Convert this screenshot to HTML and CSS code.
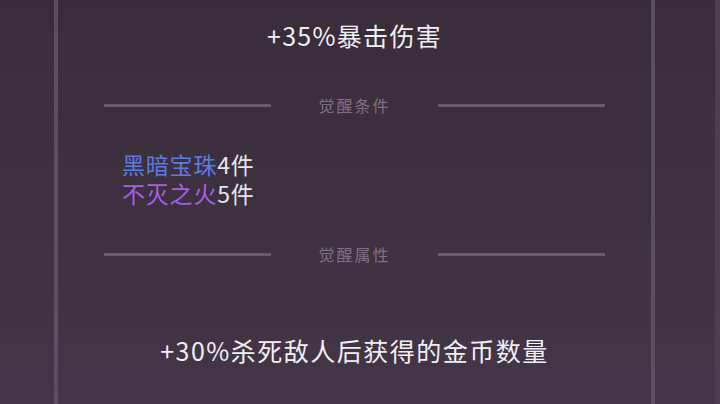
FILE: index.html
```html
<!DOCTYPE html>
<html lang="zh">
<head>
<meta charset="utf-8">
<link rel="stylesheet" href="styles.css">
</head>
<body>
<div class="page">
  <div class="panel">
    <div class="title">+35%暴击伤害</div>
    <div class="divider divider-first"><span class="line"></span><span class="label">觉醒条件</span><span class="line"></span></div>
    <div class="conds">
      <div class="cond"><span class="blue">黑暗宝珠</span>4件</div>
      <div class="cond"><span class="purple">不灭之火</span>5件</div>
    </div>
    <div class="divider divider-second"><span class="line"></span><span class="label">觉醒属性</span><span class="line"></span></div>
    <div class="bonus">+30%杀死敌人后获得的金币数量</div>
  </div>
  <div class="gap"></div>
  <div class="edge"></div>
</div>
</body>
</html>
```
FILE: styles.css
```css
html, body {
  margin: 0;
  padding: 0;
}
body {
  width: 720px;
  height: 404px;
  overflow: hidden;
  background: linear-gradient(180deg, #392d3b 0%, #3d303f 50%, #443648 100%);
  font-family: "Noto Sans CJK SC", "Noto Sans", sans-serif;
}
.page {
  display: flex;
  height: 404px;
  padding-left: 54px;
  box-sizing: border-box;
}
.panel {
  width: 593px;
  height: 404px;
  border-left: 4px solid #5a4e62;
  border-right: 4px solid #5a4e62;
  display: flex;
  flex-direction: column;
  align-items: center;
}
.gap {
  flex: 1;
}
.edge {
  width: 5px;
  background: #4a3e50;
}
.title {
  margin-top: 18px;
  height: 34px;
  line-height: 34px;
  font-size: 25px;
  letter-spacing: 1.3px;
  color: #f1eff3;
}
.divider {
  width: 501px;
  display: flex;
  align-items: center;
  justify-content: space-between;
  height: 24px;
}
.divider-first {
  margin-top: 41px;
}
.divider-second {
  margin-top: 34px;
}
.line {
  width: 167px;
  height: 3px;
  background: #675b6d;
}
.label {
  font-size: 16px;
  letter-spacing: 2px;
  color: #7c7085;
}
.conds {
  align-self: flex-start;
  margin-left: 64px;
  margin-top: 33px;
  display: flex;
  flex-direction: column;
}
.cond {
  font-size: 23px;
  line-height: 29px;
  height: 29px;
  letter-spacing: 0.8px;
  color: #e6e4ec;
}
.blue {
  color: #5c7be2;
}
.purple {
  color: #a65fe2;
}
.bonus {
  margin-top: 67px;
  height: 34px;
  line-height: 34px;
  font-size: 25px;
  letter-spacing: 1.5px;
  color: #f1eff3;
}
```
